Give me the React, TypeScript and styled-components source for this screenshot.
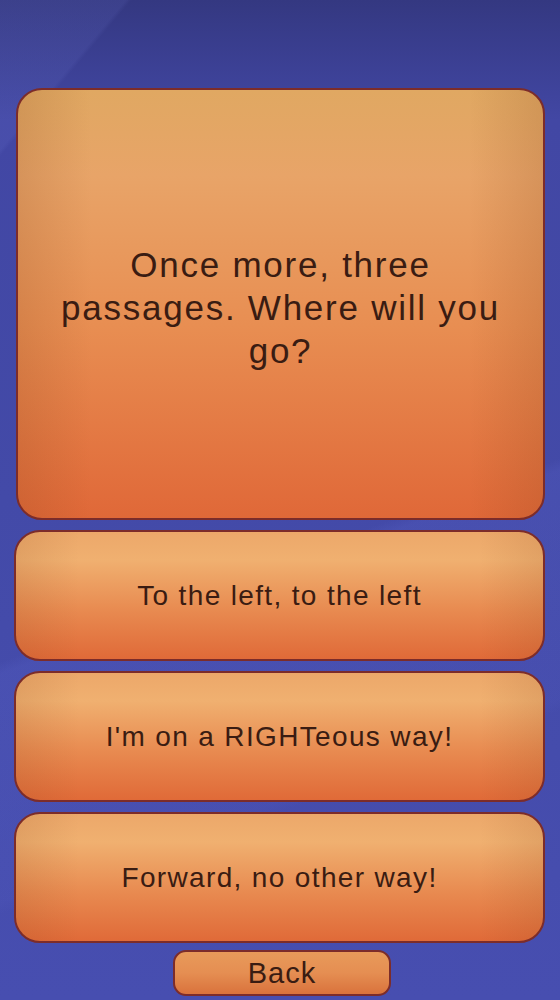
import React from 'react';
import styled, { createGlobalStyle } from 'styled-components';

const GlobalStyle = createGlobalStyle`
  html, body {
    margin: 0;
    padding: 0;
  }
  body {
    font-family: "Liberation Sans", Arial, sans-serif;
    background: #3f44a0;
  }
`;

const Screen = styled.div`
  width: 560px;
  height: 1000px;
  box-sizing: border-box;
  padding: 88px 15px 0 15px;
  display: flex;
  flex-direction: column;
  align-items: stretch;
  overflow: hidden;
  background:
    linear-gradient(130deg, rgba(130, 140, 230, 0.1) 0%, rgba(130, 140, 230, 0.1) 9%, transparent 9.4%),
    linear-gradient(160deg, transparent 55%, rgba(110, 120, 230, 0.12) 56%, rgba(110, 120, 230, 0.06) 75%, transparent 76%),
    linear-gradient(180deg, #343881 0%, #4247a4 12%, #434aa8 50%, #474eb0 100%);
`;

const QuestionCard = styled.div`
  background:
    linear-gradient(90deg, rgba(120, 60, 20, 0.16) 0%, rgba(120, 60, 20, 0) 14%, rgba(120, 60, 20, 0) 86%, rgba(120, 60, 20, 0.16) 100%),
    linear-gradient(180deg, #e0a862 0%, #e8a468 20%, #e88e52 55%, #e06838 100%);
  height: 432px;
  box-sizing: border-box;
  border: 2px solid #7c2c2a;
  border-radius: 26px;
  display: flex;
  align-items: center;
  justify-content: center;
  padding: 6px 16px 0;
  margin-left: 1px;
`;

const QuestionText = styled.p`
  margin: 0;
  font-size: 35px;
  line-height: 43px;
  letter-spacing: 1.75px;
  color: #3a1c12;
  text-align: center;
  max-width: 470px;
`;

const Options = styled.div`
  display: flex;
  flex-direction: column;
  gap: 10px;
  margin-top: 10px;
`;

const OptionButton = styled.button`
  background:
    linear-gradient(90deg, rgba(120, 60, 20, 0.12) 0%, rgba(120, 60, 20, 0) 12%, rgba(120, 60, 20, 0) 88%, rgba(120, 60, 20, 0.12) 100%),
    linear-gradient(180deg, #eca86a 0%, #f0b070 22%, #e88a50 62%, #e06a38 100%);
  height: 131px;
  box-sizing: border-box;
  border: 2px solid #7c2c2a;
  border-radius: 26px;
  font-family: "Liberation Sans", Arial, sans-serif;
  font-size: 28px;
  letter-spacing: 1.35px;
  color: #3a1c12;
  cursor: pointer;
  padding: 0 20px;
  margin-left: -1px;
`;

const BackButton = styled.button`
  align-self: center;
  margin-top: 7px;
  margin-left: 4px;
  width: 218px;
  height: 46px;
  box-sizing: border-box;
  border: 2px solid #7c2c2a;
  border-radius: 13px;
  background: linear-gradient(180deg, #e89a5a 0%, #e58e52 50%, #d9723c 100%);
  font-family: "Liberation Sans", Arial, sans-serif;
  font-size: 29px;
  letter-spacing: 1px;
  color: #3a1c12;
  padding: 0;
  cursor: pointer;
`;

const options = [
  'To the left, to the left',
  "I'm on a RIGHTeous way!",
  'Forward, no other way!',
];

export default function App() {
  return (
    <>
      <GlobalStyle />
      <Screen>
        <QuestionCard>
          <QuestionText>Once more, three passages. Where will you go?</QuestionText>
        </QuestionCard>
        <Options>
          {options.map((o) => (
            <OptionButton key={o}>{o}</OptionButton>
          ))}
        </Options>
        <BackButton>Back</BackButton>
      </Screen>
    </>
  );
}
